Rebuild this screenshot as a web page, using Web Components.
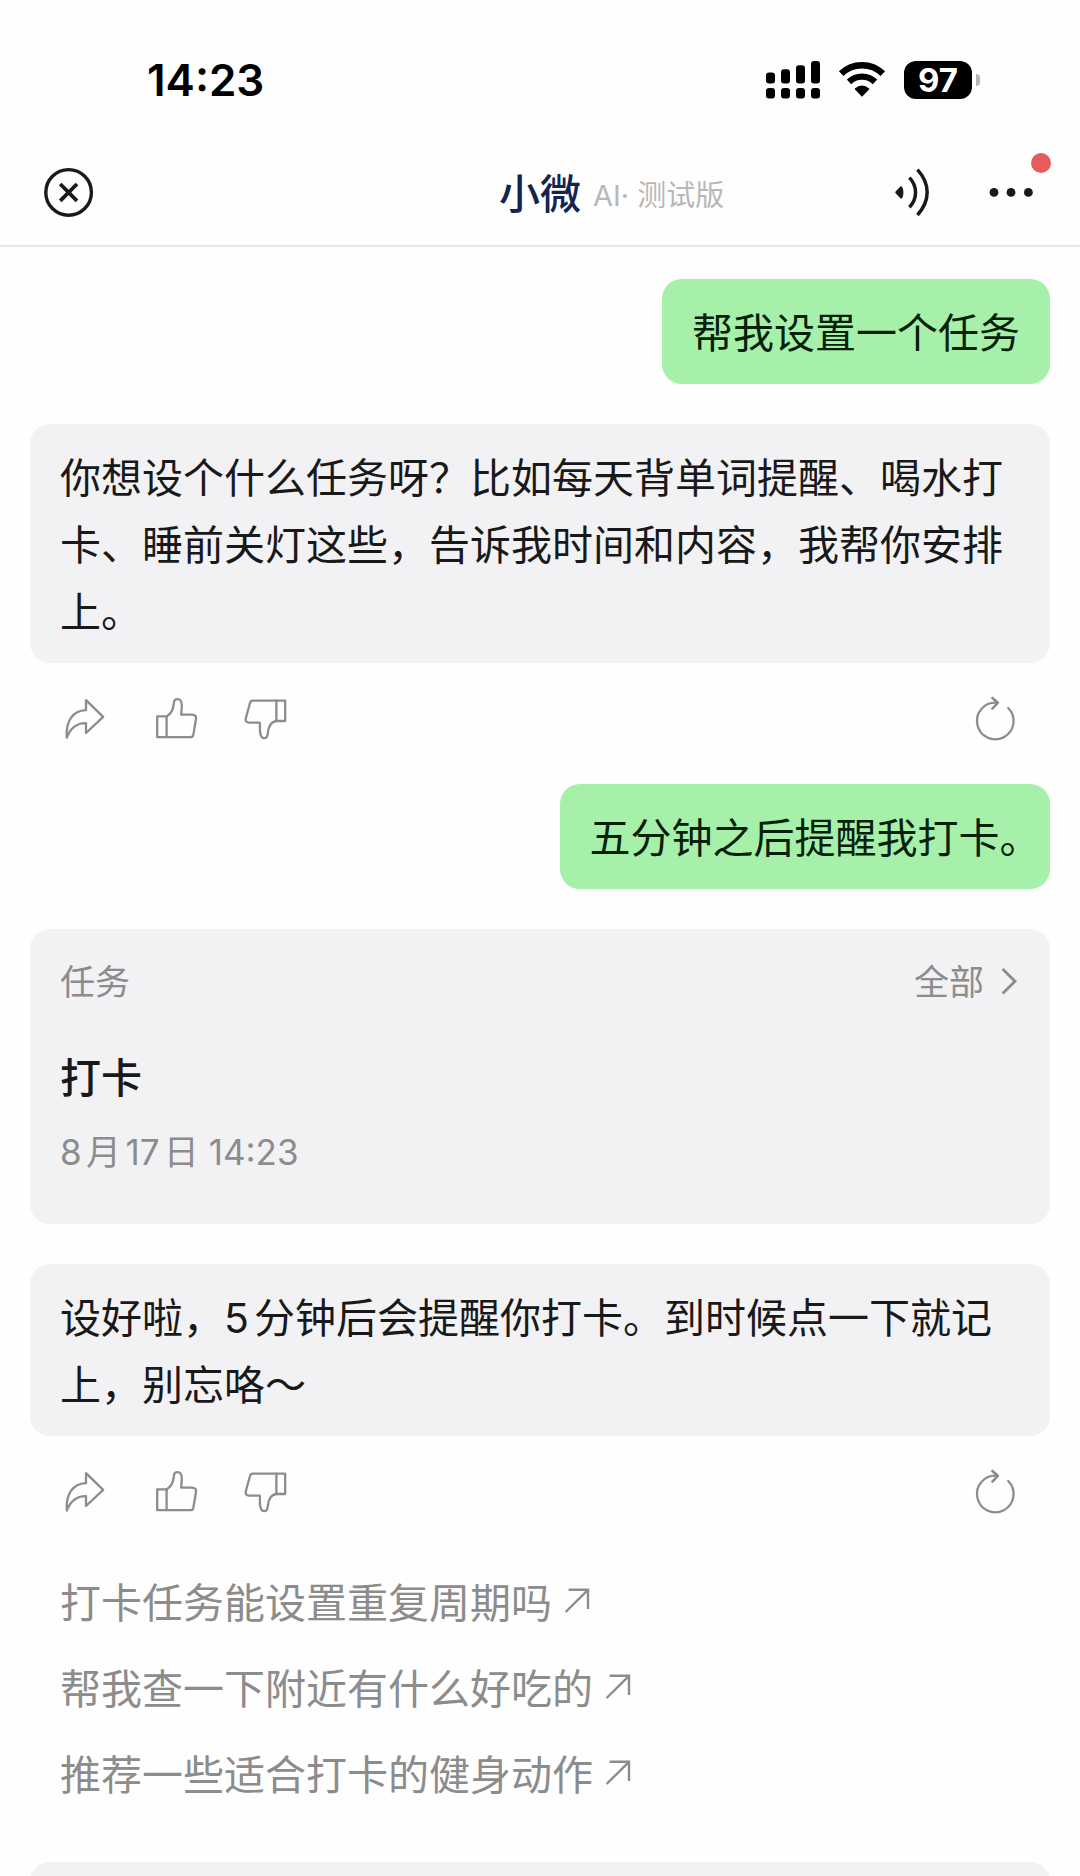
<!DOCTYPE html>
<html lang="zh-CN">
<head>
<meta charset="utf-8">
<meta name="viewport" content="width=device-width, initial-scale=1">
<title>小微</title>
<style>
    body {
        margin: 0;
        background-color: #fefefe;
        color: #191919;
        font-family: Inter, "Noto Sans CJK SC", sans-serif;
        text-autospace: normal;
    }

    .stop {
        font-feature-settings: "halt";
    }
</style>
</head>
<body>

<chat-app>
    <status-bar slot="top" time="14:23" battery="97"></status-bar>
    <chat-header slot="top" name="小微" tag="AI· 测试版"></chat-header>

    <user-message>帮我设置一个任务</user-message>
    <bot-message>你想设个什么任务呀？比如每天背单词提醒、喝水打卡、睡前关灯这些，告诉我时间和内容，我帮你安排上。</bot-message>
    <user-message>五分钟之后提醒我打卡<span class="stop">。</span></user-message>
    <task-card>
        <span slot="title">打卡</span>
        <span slot="date">8月17日 14:23</span>
    </task-card>
    <bot-message>设好啦，5分钟后会提醒你打卡。到时候点一下就记上，别忘咯～</bot-message>
    <suggestion-list>
        <suggestion-item>打卡任务能设置重复周期吗</suggestion-item>
        <suggestion-item>帮我查一下附近有什么好吃的</suggestion-item>
        <suggestion-item>推荐一些适合打卡的健身动作</suggestion-item>
    </suggestion-list>
    <input-bar></input-bar>
</chat-app>

<script>
class ChatApp extends HTMLElement {
    constructor() {
        super();
        this.shadow = this.attachShadow({mode: "open"});
    }

    connectedCallback() {
        this.shadow.innerHTML = `
<style>
:host {
    display: flex;
    flex-direction: column;
    height: 100vh;
    overflow: hidden;
}

main {
    flex: 1;
    min-height: 0;
    overflow: hidden;
    display: flex;
    flex-direction: column;
    gap: 40px;
    padding: 32px 30px 0;
}
</style>

<slot name="top"></slot>
<main><slot></slot></main>
`
    }
}

customElements.define("chat-app", ChatApp);


class StatusBar extends HTMLElement {
    constructor() {
        super();
        this.shadow = this.attachShadow({mode: "open"});
    }

    connectedCallback() {
        this.shadow.innerHTML = `
<style>
:host {
    display: flex;
    align-items: center;
    justify-content: space-between;
    flex: none;
    box-sizing: border-box;
    height: 139px;
    padding: 20px 100px 0 147px;
    color: #000;
}

.time {
    font-weight: 600;
    font-size: 44px;
    line-height: 50px;
}

.icons {
    display: flex;
    align-items: center;
    gap: 18px;
}

svg {
    display: block;
}

.battery {
    display: flex;
    align-items: center;
    gap: 4px;
}

.level {
    width: 68px;
    border-radius: 12px;
    background-color: #000;
    color: #fff;
    font-weight: 700;
    font-size: 33px;
    line-height: 38px;
    text-align: center;
}

.nub {
    width: 4px;
    height: 12px;
    border-radius: 0 4px 4px 0;
    background-color: #b5b5b5;
}
</style>

<span class="time">${this.getAttribute("time")}</span>
<div class="icons">
    <svg width="54" height="38" viewBox="0 0 54 38">
        <rect x="0" y="11.4" width="9" height="11" rx="3"/>
        <rect x="15" y="8.2" width="9" height="14.2" rx="3"/>
        <rect x="30" y="4.2" width="9" height="18.2" rx="3"/>
        <rect x="45" y="0" width="9" height="22.4" rx="3"/>
        <rect x="0" y="27" width="9" height="10.4" rx="3"/>
        <rect x="15" y="27" width="9" height="10.4" rx="3"/>
        <rect x="30" y="27" width="9" height="10.4" rx="3"/>
        <rect x="45" y="27" width="9" height="10.4" rx="3"/>
    </svg>
    <svg width="48" height="38" viewBox="0 0 48 38">
        <path d="M3.2 12.6A30 30 0 0 1 44.8 12.6" fill="none" stroke="#000" stroke-width="6.6"/>
        <path d="M11 20.8A19 19 0 0 1 37 20.8" fill="none" stroke="#000" stroke-width="6.4"/>
        <path d="M16.8 27.4Q24 21.6 31.2 27.4Q31.4 28.2 30.6 29L24 35.8L17.4 29Q16.6 28.2 16.8 27.4Z"/>
    </svg>
    <div class="battery">
        <span class="level">${this.getAttribute("battery")}</span>
        <span class="nub"></span>
    </div>
</div>
`
    }
}

customElements.define("status-bar", StatusBar);


class ChatHeader extends HTMLElement {
    constructor() {
        super();
        this.shadow = this.attachShadow({mode: "open"});
    }

    connectedCallback() {
        this.shadow.innerHTML = `
<style>
:host {
    display: grid;
    grid-template-columns: 1fr auto 1fr;
    align-items: center;
    column-gap: 12px;
    flex: none;
    height: 106px;
    padding: 0 44px;
    border-bottom: 2px solid #e8e8e8;
}

h1 {
    margin: 0;
    padding-top: 4px;
    color: #14234f;
    font-weight: 500;
    font-size: 41px;
    line-height: 50px;
}

.right {
    display: flex;
    align-items: center;
}

.tag {
    margin-right: auto;
    padding-top: 8px;
    color: #b8b8b8;
    font-size: 29px;
    line-height: 50px;
    white-space: nowrap;
}

button {
    position: relative;
    width: 50px;
    height: 50px;
    padding: 0;
    border: none;
    background: none;
    color: inherit;
    cursor: pointer;
}

.more {
    margin-left: 49px;
}

svg {
    display: block;
}

.badge {
    position: absolute;
    top: -14px;
    right: -15px;
    width: 20px;
    height: 20px;
    border-radius: 50%;
    background-color: #e65c5c;
}
</style>

<button class="close" aria-label="关闭">
    <svg width="50" height="50" viewBox="0 0 50 50" fill="none" stroke="#191919" stroke-width="3.4" stroke-linecap="round">
        <circle cx="24.6" cy="25.4" r="22.8"/>
        <path d="M16.2 17L33 33.8M33 17L16.2 33.8" stroke-width="3.8" stroke-linecap="butt"/>
    </svg>
</button>
<h1>${this.getAttribute("name")}</h1>
<div class="right">
    <span class="tag">${this.getAttribute("tag")}</span>
    <button class="sound" aria-label="朗读">
        <svg width="50" height="50" viewBox="0 0 50 50" fill="none" stroke="#191919" stroke-width="3.5">
            <path d="M8.6 24.6L13.6 19.2C15.4 18.8 16.4 21.4 16.4 25.4C16.4 29.4 15.4 32 13.6 31.6L8.6 26.2Q7.8 25.4 8.6 24.6Z" fill="#191919" stroke="none"/>
            <path d="M22.4 10.6C30.6 19.2 30.6 31.6 22.4 40.2"/>
            <path d="M30.4 2.6C43.4 16.6 43.4 34 30.4 48"/>
        </svg>
    </button>
    <button class="more" aria-label="更多">
        <svg width="50" height="50" viewBox="0 0 50 50" fill="#191919">
            <circle cx="8" cy="25.4" r="4.4"/>
            <circle cx="25" cy="25.4" r="4.4"/>
            <circle cx="42.4" cy="25.4" r="4.4"/>
        </svg>
        <span class="badge"></span>
    </button>
</div>
`
    }
}

customElements.define("chat-header", ChatHeader);


class UserMessage extends HTMLElement {
    constructor() {
        super();
        this.shadow = this.attachShadow({mode: "open"});
    }

    connectedCallback() {
        this.shadow.innerHTML = `
<style>
:host {
    display: block;
    align-self: flex-end;
    flex: none;
    padding: 21px 30px 17px;
    border-radius: 20px;
    background-color: #a6f0aa;
    color: #06200a;
    font-size: 41px;
    line-height: 67px;
}
</style>

<slot></slot>
`
    }
}

customElements.define("user-message", UserMessage);


class BotMessage extends HTMLElement {
    constructor() {
        super();
        this.shadow = this.attachShadow({mode: "open"});
    }

    connectedCallback() {
        this.shadow.innerHTML = `
<style>
:host {
    display: flex;
    flex-direction: column;
    flex: none;
    gap: 31px;
}

.bubble {
    padding: 21px 30px 17px;
    border-radius: 20px;
    background-color: #f2f2f4;
    font-size: 41px;
    line-height: 67px;
}
</style>

<div class="bubble"><slot></slot></div>
<message-actions></message-actions>
`
    }
}

customElements.define("bot-message", BotMessage);


class MessageActions extends HTMLElement {
    constructor() {
        super();
        this.shadow = this.attachShadow({mode: "open"});
    }

    connectedCallback() {
        this.shadow.innerHTML = `
<style>
:host {
    display: flex;
    gap: 40px;
    padding: 0 30px;
}

button {
    width: 50px;
    height: 50px;
    padding: 0;
    border: none;
    background: none;
    cursor: pointer;
}

.retry {
    margin-left: auto;
}

svg {
    display: block;
    fill: none;
    stroke: #8c8c8c;
    stroke-width: 2.3;
    stroke-linejoin: round;
    stroke-linecap: round;
}
</style>

<button aria-label="分享">
    <svg width="50" height="50" viewBox="0 0 50 50">
        <path d="M26 6.2L43.2 22.8L26 39V29.2C17.6 29 11 33 6.8 43.6C5.6 27 12.6 16.8 26 16.2Z"/>
    </svg>
</button>
<button aria-label="赞">
    <svg width="50" height="50" viewBox="0 0 50 50">
        <path d="M7.2 22.4H16.6V43.2H7.2Z"/>
        <path d="M16.6 22.4C21.4 19.6 23.4 15.4 23.8 9.4C24 6.4 25.4 5.2 27.4 5.2C29.8 5.2 31.8 7.4 31.8 11.6C31.8 14.8 31.4 17.4 31.2 20.6H42C45 20.6 46.4 22.4 46 25L43.4 40.4C43 42.4 42.2 43.2 40.4 43.2H16.6"/>
    </svg>
</button>
<button aria-label="踩">
    <svg width="50" height="50" viewBox="0 0 50 50">
        <path d="M36.4 6.6H45.2V27H36.4Z"/>
        <path d="M36.4 6.6H12.8C11.2 6.6 10.4 7.4 10 9L5.8 24.2C5.2 26.8 6.4 28.6 9 28.6H19.8C20.2 32 19.6 35 20.2 39C20.8 42.4 22 44.2 24.2 44.2C26.6 44.2 27.6 42.2 27.8 39.2C28.2 33.4 30.8 27.6 36.4 27"/>
    </svg>
</button>
<button class="retry" aria-label="重新生成">
    <svg width="50" height="50" viewBox="0 0 50 50">
        <path d="M38.2 14A18.3 18.3 0 1 1 27.4 8.8"/>
        <path d="M22.4 4L27.8 8.8L22.4 14.6" stroke-width="2.6"/>
    </svg>
</button>
`
    }
}

customElements.define("message-actions", MessageActions);


class TaskCard extends HTMLElement {
    constructor() {
        super();
        this.shadow = this.attachShadow({mode: "open"});
    }

    connectedCallback() {
        this.shadow.innerHTML = `
<style>
:host {
    display: block;
    flex: none;
    padding: 20px 30px 38px;
    border-radius: 20px;
    background-color: #f2f2f4;
    line-height: 67px;
}

.top {
    display: flex;
    align-items: center;
    justify-content: space-between;
    color: #8c8c8c;
    font-size: 35px;
}

button {
    display: flex;
    align-items: center;
    gap: 14px;
    padding: 0;
    border: none;
    background: none;
    color: inherit;
    font: inherit;
    cursor: pointer;
}

.title {
    margin-top: 29px;
    font-weight: 500;
    font-size: 41px;
}

.date {
    margin-top: 7px;
    color: #8c8c8c;
    font-size: 35px;
}
</style>

<div class="top">
    <span>任务</span>
    <button>全部<svg width="22" height="30" viewBox="0 0 22 30" fill="none" stroke="#8c8c8c" stroke-width="2.8"><path d="M4.6 1L17 13.2L4.6 25.4"/></svg></button>
</div>
<div class="title"><slot name="title"></slot></div>
<div class="date"><slot name="date"></slot></div>
`
    }
}

customElements.define("task-card", TaskCard);


class SuggestionList extends HTMLElement {
    constructor() {
        super();
        this.shadow = this.attachShadow({mode: "open"});
    }

    connectedCallback() {
        this.shadow.innerHTML = `
<style>
:host {
    display: flex;
    flex-direction: column;
    align-items: flex-start;
    flex: none;
    padding: 3px 30px 0;
}
</style>

<slot></slot>
`
    }
}

customElements.define("suggestion-list", SuggestionList);


class SuggestionItem extends HTMLElement {
    constructor() {
        super();
        this.shadow = this.attachShadow({mode: "open"});
    }

    connectedCallback() {
        this.shadow.innerHTML = `
<style>
:host {
    display: block;
}

button {
    display: flex;
    align-items: center;
    gap: 11px;
    padding: 0;
    border: none;
    background: none;
    color: #8c8c8c;
    font: inherit;
    font-size: 41px;
    line-height: 86px;
    text-align: left;
    cursor: pointer;
}
</style>

<button>
    <span><slot></slot></span>
    <svg width="28" height="30" viewBox="0 0 28 30" fill="none" stroke="#8c8c8c" stroke-width="2.4">
        <path d="M2.6 24L25 1.8M5.6 1.8H25V21"/>
    </svg>
</button>
`
    }
}

customElements.define("suggestion-item", SuggestionItem);


class InputBar extends HTMLElement {
    constructor() {
        super();
        this.shadow = this.attachShadow({mode: "open"});
    }

    connectedCallback() {
        this.shadow.innerHTML = `
<style>
:host {
    display: block;
    flex: none;
    height: 120px;
    margin-top: 4px;
    border-radius: 20px;
    background-color: #f2f2f4;
}
</style>
`
    }
}

customElements.define("input-bar", InputBar);
</script>
</body>
</html>
